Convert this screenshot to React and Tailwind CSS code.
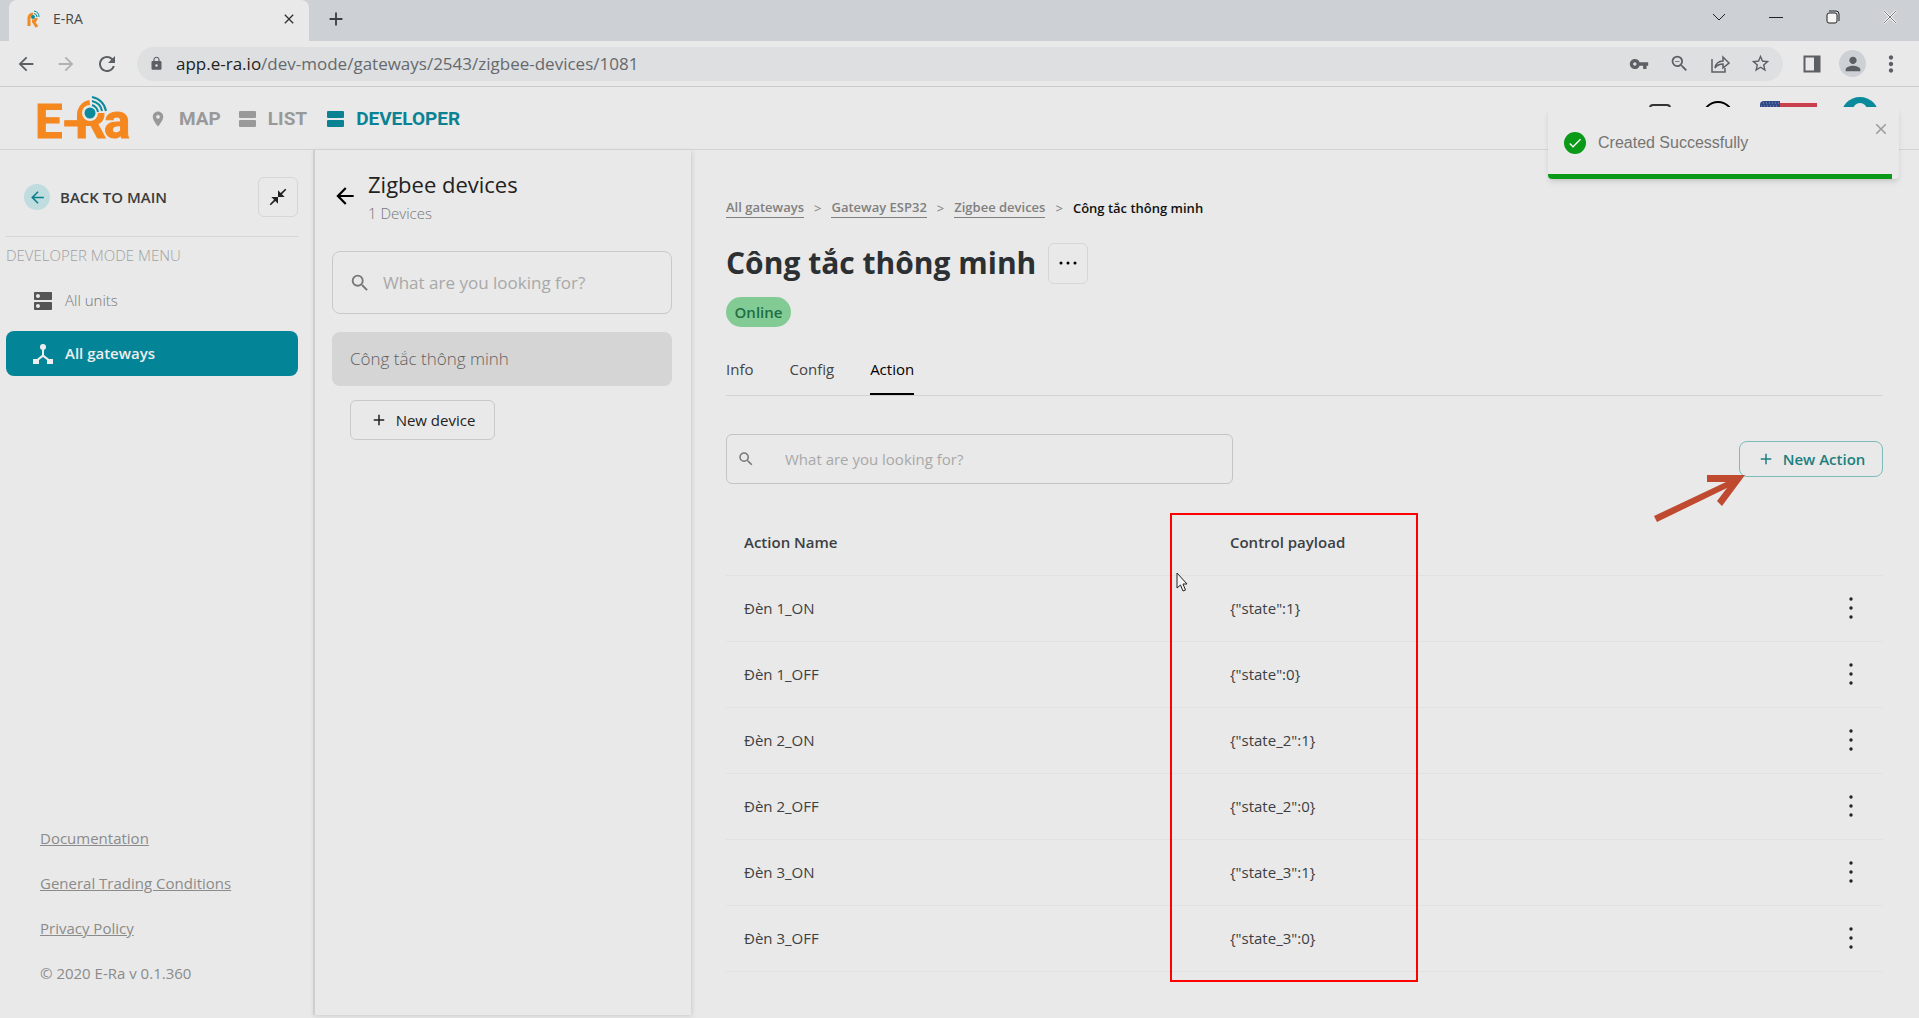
import React from "react";
import { MdArrowBack, MdArrowForward, MdRefresh, MdLock, MdVpnKey, MdZoomOut, MdStarBorder, MdPerson, MdMoreVert, MdPlace, MdSearch, MdClose, MdAdd, MdCloseFullscreen, MdDns, MdCheck } from "react-icons/md";

const actions = [
  ["Đèn 1_ON", '{"state":1}'],
  ["Đèn 1_OFF", '{"state":0}'],
  ["Đèn 2_ON", '{"state_2":1}'],
  ["Đèn 2_OFF", '{"state_2":0}'],
  ["Đèn 3_ON", '{"state_3":1}'],
  ["Đèn 3_OFF", '{"state_3":0}'],
];

function Favicon() {
  return (
    <svg width="14" height="18" viewBox="0 0 14 18" aria-hidden="true">
      <path d="M2 16V8a4 4 0 0 1 4-4" fill="none" stroke="#f08a24" strokeWidth="3" />
      <path d="M5 11h2a2.500 2.500 0 0 0 2-3M6 11l4 6" fill="none" stroke="#f08a24" strokeWidth="3" />
      <circle cx="6" cy="7" r="2" fill="#0b8a9c" />
      <path d="M7 1a6 6 0 0 1 5 6M7 3.500a3.500 3.500 0 0 1 3 3.500" fill="none" stroke="#0b8a9c" strokeWidth="1" />
    </svg>
  );
}

function Logo() {
  return (
    <svg width="96" height="48" viewBox="0 0 96 48" className="overflow-visible" role="img" aria-label="E-Ra">
      <text x="-1 26 39 68" y="44" fontFamily="Roboto, 'Liberation Sans', sans-serif" fontWeight="700" fontSize="49" fill="#f5871f" stroke="#f5871f" strokeWidth="1">E-Ra</text>
      <path d="M38 7h32v12H56l-7 4H38z" fill="#e9e9e9" />
      <path d="M45 28V21a11 11 0 0 1 9-11" fill="none" stroke="#f5871f" strokeWidth="8" />
      <circle cx="54" cy="19" r="8" fill="#e9e9e9" />
      <circle cx="54" cy="19" r="5.500" fill="#0b8a9c" />
      <path d="M56 11a9 9 0 0 1 6 7M56 7a13 13 0 0 1 10 10M56 3a17 17 0 0 1 14 14" fill="none" stroke="#0b8a9c" strokeWidth="2" />
    </svg>
  );
}

function Stack() {
  return (
    <svg width="17" height="16" viewBox="0 0 17 16" fill="currentColor" aria-hidden="true">
      <rect width="17" height="7" rx="1" />
      <rect y="9" width="17" height="7" rx="1" />
    </svg>
  );
}

function Flag() {
  return (
    <svg width="57" height="32" viewBox="0 0 57 32" aria-label="English">
      <rect width="57" height="32" rx="4" fill="#f0e4e4" />
      <path d="M18 4h39M18 12h39M0 20h57M0 28h57" stroke="#c9404d" strokeWidth="4" />
      <path d="M4 0h16v16H0V4a4 4 0 0 1 4-4z" fill="#2f4a86" />
      <path d="M3 2h16M1 5h18" stroke="#8d9cc4" strokeDasharray="1 2" />
    </svg>
  );
}

function BrowserBar() {
  return (
    <div className="bg-[#e9e9e9]">
      <div className="flex h-[41px] items-stretch bg-[#cdd0d5]">
        <div className="ml-[9px] flex w-[300px] items-center rounded-t-lg bg-[#e9e9e9] pr-3 pb-1 pl-[18px] text-[14px] text-[#45484c]">
          <Favicon />
          <span className="ml-3 flex-1">E-RA</span>
          <button aria-label="Close tab" className="text-[#333]"><MdClose size={16} /></button>
        </div>
        <button aria-label="New tab" className="ml-4 pb-[3px] text-[#3b3e42]"><MdAdd size={22} /></button>
        <div className="ml-auto flex items-center gap-[43px] pr-[22px] pb-2 text-[#222]">
          <button aria-label="Tab search"><svg width="14" height="16" viewBox="0 0 14 16" fill="none" stroke="currentColor"><path d="M1 5l6 6 6-6" /></svg></button>
          <button aria-label="Minimize"><svg width="14" height="16" viewBox="0 0 14 16" stroke="currentColor"><path d="M0 8.500h14" /></svg></button>
          <button aria-label="Restore"><svg width="14" height="16" viewBox="0 0 14 16" fill="none" stroke="currentColor"><rect x="1" y="4" width="10" height="10" rx="2" fill="#f4f4f4" /><path d="M3 2h7a3 3 0 0 1 3 3v7" /></svg></button>
          <button aria-label="Close window"><svg width="14" height="16" viewBox="0 0 14 16" stroke="#fff" strokeWidth="2"><path d="M1 2l12 12M13 2L1 14" /><path d="M1 2l12 12M13 2L1 14" stroke="#777" strokeWidth="1" /></svg></button>
        </div>
      </div>
      <div className="flex h-[46px] items-center border-b border-[#cbcbcb] pr-[15px] pl-[15px] text-[#5c5f63]">
        <button aria-label="Back"><MdArrowBack size={22} /></button>
        <button aria-label="Forward" className="ml-[18px] text-[#b0b2b4]"><MdArrowForward size={22} /></button>
        <button aria-label="Reload" className="ml-[18px]"><MdRefresh size={24} /></button>
        <div className="ml-[18px] flex h-[34px] flex-1 items-center rounded-full bg-[#dddfe1] pr-3 pl-3">
          <MdLock size={15} />
          <div role="textbox" aria-label="Address" tabIndex={0} className="ml-3 flex-1 text-[17px] leading-6 text-[#66696d]"><span className="text-[#222]">app.e-ra.io</span>/dev-mode/gateways/2543/zigbee-devices/1081</div>
          <div className="flex items-center gap-5">
            <button aria-label="Passwords"><MdVpnKey size={20} /></button>
            <button aria-label="Zoom"><MdZoomOut size={21} /></button>
            <button aria-label="Share"><svg width="20" height="20" viewBox="0 0 20 20" fill="none" stroke="currentColor" strokeWidth="1.500"><path d="M2 5v13h13v-4M5 14c1-5 4-7 8-7V3l6 6-6 5v-4c-4 0-6 1-8 4z" /></svg></button>
            <button aria-label="Bookmark"><MdStarBorder size={21} /></button>
          </div>
        </div>
        <button aria-label="Side panel" className="ml-5"><svg width="18" height="18" viewBox="0 0 18 18"><path d="M1.500 1.500h15v15h-15z" fill="none" stroke="currentColor" strokeWidth="2" /><path d="M11 1h6v16h-6z" fill="currentColor" /></svg></button>
        <button aria-label="Profile" className="ml-[18px] flex size-[27px] items-center justify-center rounded-full bg-[#cdd0d5]"><MdPerson size={22} /></button>
        <button aria-label="Browser menu" className="ml-3"><MdMoreVert size={26} /></button>
      </div>
    </div>
  );
}

function Toast() {
  return (
    <div role="status" className="absolute top-[107px] right-[20px] w-[351px] rounded bg-[#e9e9e9] shadow-md">
      <div className="flex h-[67px] items-center pl-4">
        <span className="mt-1 flex size-[22px] items-center justify-center rounded-full bg-[#0a9a18] text-white"><MdCheck size={16} /></span>
        <span className="mt-1 ml-3 font-['Liberation_Sans',sans-serif] text-[16px] text-[#757575]">Created Successfully</span>
        <button aria-label="Dismiss" className="mr-[9px] mb-6 ml-auto text-[#9a9a9a]"><MdClose size={18} /></button>
      </div>
      <div className="mr-[7px] h-[5px] rounded-bl bg-[#0a9a18]" />
    </div>
  );
}

function AppHeader() {
  return (
    <header className="flex h-[63px] items-center border-b border-[#d3d3d3] pr-[40px] pl-[36px]">
      <Logo />
      <nav className="ml-[17px] flex items-center pt-[2px] font-['Roboto',sans-serif] text-[19px] font-bold text-[#999]">
        <a href="#map" className="flex items-center gap-3"><MdPlace size={18} />MAP</a>
        <a href="#list" className="ml-[18px] flex items-center gap-3"><Stack />LIST</a>
        <a href="#developer" className="ml-5 flex items-center gap-3 text-[#0b8294]"><Stack />DEVELOPER</a>
      </nav>
      <div className="ml-auto flex items-start self-start pt-[10px]">
        <button aria-label="Messages" className="mt-[7px] mr-[31px] h-4 w-[22px] rounded border-2 border-[#333]" />
        <button aria-label="Help" className="mt-1 mr-[26px] size-8 rounded-full border-2 border-black" />
        <button aria-label="Language" className="mt-1 mr-[24px]"><Flag /></button>
        <button aria-label="Account" className="flex size-[38px] justify-center rounded-full bg-[#0b8a9c] pt-[6px]"><span className="size-[14px] rounded-full bg-[#e9e9e9]" /></button>
      </div>
    </header>
  );
}

function Sidebar() {
  return (
    <aside className="flex w-[313px] shrink-0 flex-col pl-[6px] pr-[15px]">
      <div className="flex h-[87px] items-center border-b border-[#d6d6d6] pt-2">
        <a href="#main" className="ml-[18px] flex items-center gap-[10px] text-[15px] font-semibold text-[#3c3c3c]">
          <span className="flex size-[26px] items-center justify-center rounded-full bg-[#bfdcdf] text-[#0b7f8e]"><MdArrowBack size={19} /></span>
          BACK TO MAIN
        </a>
        <button aria-label="Collapse menu" className="ml-auto flex size-10 items-center justify-center rounded-md border border-[#d6d6d6] text-[#222]"><MdCloseFullscreen size={20} /></button>
      </div>
      <p className="mt-2 text-[15px] leading-5 font-light text-[#a0a0a0]">DEVELOPER MODE MENU</p>
      <a href="#units" className="mt-[13px] flex h-[45px] items-center gap-[10px] pl-[25px] text-[15px] font-light text-[#777]"><span className="text-[#555]"><MdDns size={24} /></span>All units</a>
      <a href="#gateways" className="mt-2 flex h-[45px] items-center gap-3 rounded-lg bg-[#048497] pl-[27px] text-[15px] font-semibold text-[#eee]">
        <svg width="20" height="20" viewBox="0 0 20 20" fill="currentColor"><circle cx="10" cy="3" r="3" /><path d="M9 4h2v7l5 4h4v5h-6v-4l-4-3-4 3v4H0v-5h4l5-4z" /></svg>
        All gateways
      </a>
      <footer className="mt-auto flex flex-col items-start gap-[25px] pb-[35px] pl-[34px] text-[15px] leading-5 text-[#8b8b8b]">
        <a href="#doc" className="underline">Documentation</a>
        <a href="#terms" className="underline">General Trading Conditions</a>
        <a href="#privacy" className="underline">Privacy Policy</a>
        <span>© 2020 E-Ra v 0.1.360</span>
      </footer>
    </aside>
  );
}

function DevicePanel() {
  return (
    <section className="mb-[3px] flex w-[378px] shrink-0 flex-col border-l-2 border-[#cfcfcf] pr-[19px] pl-[17px] shadow-[1px_1px_4px_#ccc]">
      <div className="flex items-center gap-[10px] pt-[18px]">
        <button aria-label="Back to gateways" className="text-black"><MdArrowBack size={26} /></button>
        <div>
          <h2 className="text-[22px] leading-8 font-medium text-[#222]">Zigbee devices</h2>
          <p className="mt-[3px] text-[15px] leading-5 font-light text-[#777]">1 Devices</p>
        </div>
      </div>
      <div className="mt-7 flex h-[63px] items-center rounded-lg border border-[#c9c9c9] px-4 text-[#777]">
        <MdSearch size={22} />
        <input aria-label="Search devices" placeholder="What are you looking for?" className="ml-3 h-8 min-w-0 flex-1 text-[17px] outline-none placeholder:text-[#a8a8a8]" />
      </div>
      <button className="mt-[18px] h-[54px] rounded-lg bg-[#d5d5d5] pl-[18px] text-left text-[17px] font-light text-[#5f5f5f]">Công tắc thông minh</button>
      <button className="mt-[14px] ml-[18px] flex h-10 w-[145px] items-center justify-center gap-2 rounded-md border border-[#c9c9c9] text-[15px] font-medium text-[#222]"><MdAdd size={18} />New device</button>
    </section>
  );
}

function Details() {
  return (
    <main className="min-w-0 flex-1 pr-9 pl-[35px]">
      <nav aria-label="Breadcrumb" className="mt-[48px] flex gap-[10px] text-[13px] leading-5 text-[#808080]">
        <a href="#g" className="border-b border-[#808080] leading-[19px] font-semibold">All gateways</a><span>&gt;</span>
        <a href="#e" className="border-b border-[#808080] leading-[19px] font-semibold">Gateway ESP32</a><span>&gt;</span>
        <a href="#z" className="border-b border-[#808080] leading-[19px] font-semibold">Zigbee devices</a><span>&gt;</span>
        <span className="font-semibold text-[#111]">Công tắc thông minh</span>
      </nav>
      <div className="mt-[24px] flex items-center gap-3">
        <h1 className="text-[30px] leading-[42px] font-bold text-[#2c3033]">Công tắc thông minh</h1>
        <button aria-label="More" className="flex h-[41px] w-10 items-center justify-center rounded-md border border-[#d6d6d6] text-black">
          <svg width="20" height="4" viewBox="0 0 20 4" fill="currentColor"><circle cx="3" cy="2" r="1.500" /><circle cx="10" cy="2" r="1.500" /><circle cx="17" cy="2" r="1.500" /></svg>
        </button>
      </div>
      <span className="mt-[13px] flex h-[30px] w-[65px] items-center justify-center rounded-full bg-[#82cb94] text-[15px] font-semibold text-[#1f6e43]">Online</span>
      <div role="tablist" className="mt-[28px] flex h-[41px] gap-9 border-b border-[#d3d3d3] text-[15px] text-[#444]">
        <button role="tab" aria-selected="false" className="pb-[11px]">Info</button>
        <button role="tab" aria-selected="false" className="pb-[11px]">Config</button>
        <button role="tab" aria-selected="true" className="border-b-2 border-black pb-[9px] font-medium text-black">Action</button>
      </div>
      <div className="mt-[38px] flex items-center justify-between">
        <div className="flex h-[50px] w-[507px] items-center rounded-md border border-[#c4c4c4] px-[10px] text-[#777]">
          <MdSearch size={18} />
          <input aria-label="Search actions" placeholder="What are you looking for?" className="ml-[30px] h-8 min-w-0 flex-1 text-[15px] outline-none placeholder:text-[#a8a8a8]" />
        </div>
        <button className="flex h-9 w-[144px] items-center justify-center gap-2 rounded-lg border border-[#7dbcb9] text-[15px] font-semibold text-[#1b7f80]"><MdAdd size={18} />New Action</button>
      </div>
      <table className="mt-[25px] w-full table-fixed text-left text-[15px] text-[#3c4043]">
        <thead>
          <tr className="h-[66px] border-b border-[#e1e1e1]">
            <th className="w-[42%] pl-[18px] font-semibold">Action Name</th>
            <th className="pl-[18px] font-semibold">Control payload</th>
            <th className="w-[68px]" aria-label="Options" />
          </tr>
        </thead>
        <tbody>
          {actions.map(([name, payload]) => (
            <tr key={name} className="h-[66px] border-b border-[#e1e1e1]">
              <td className="pl-[18px]">{name}</td>
              <td className="pl-[18px]">{payload}</td>
              <td className="pl-[32px]">
                <button aria-label={"Options for " + name} className="block text-[#222]">
                  <svg width="8" height="24" viewBox="0 0 8 24" fill="currentColor"><circle cx="4" cy="3" r="1.700" /><circle cx="4" cy="12" r="1.700" /><circle cx="4" cy="21" r="1.700" /></svg>
                </button>
              </td>
            </tr>
          ))}
        </tbody>
      </table>
    </main>
  );
}

export default function App() {
  return (
    <div className="relative flex min-h-screen flex-col overflow-hidden bg-[#e9e9e9] font-['Open_Sans','Noto_Sans',sans-serif]">
      <BrowserBar />
      <AppHeader />
      <div className="flex flex-1">
        <Sidebar />
        <DevicePanel />
        <Details />
      </div>
      <Toast />
      <div className="pointer-events-none absolute top-[513px] right-[501px] h-[469px] w-[248px] border-2 border-[#ff0000]" />
      <svg className="pointer-events-none absolute top-[475px] right-[174px]" width="91" height="48" viewBox="0 0 91 48" fill="#bf4a30"><path d="M91 0L68 31l-5-5 10-13L3 47 0 41 72 7H53V0z" /></svg>
      <svg className="pointer-events-none absolute top-[572px] right-[731px]" width="12" height="20" viewBox="0 0 12 20"><path d="M1 1v15l3.500-3 2.500 6 2.500-1-2.500-6h4z" fill="#f4f4f4" stroke="#222" /></svg>
    </div>
  );
}
